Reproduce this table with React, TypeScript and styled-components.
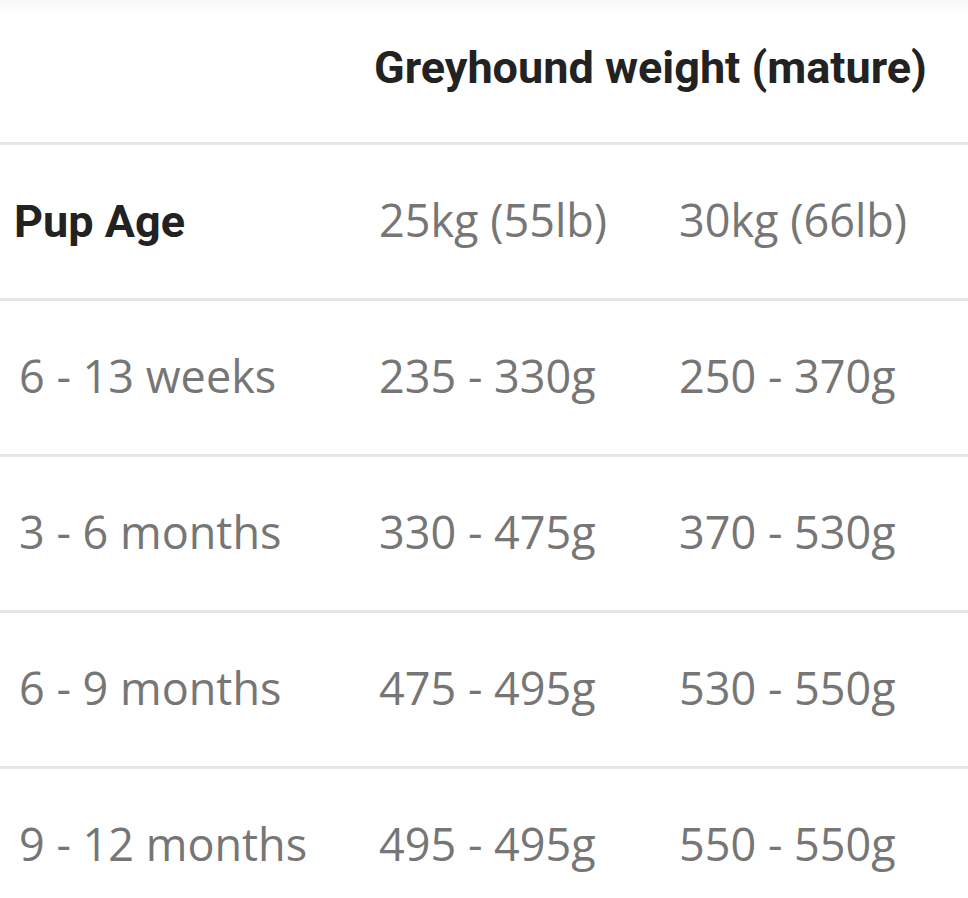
import React from "react";
import styled, { createGlobalStyle } from "styled-components";

const GlobalStyle = createGlobalStyle`
  html, body {
    margin: 0;
    padding: 0;
    background: #ffffff;
  }
`;

const rows = [
  { age: "6 - 13 weeks", a: "235 - 330g", b: "250 - 370g" },
  { age: "3 - 6 months", a: "330 - 475g", b: "370 - 530g" },
  { age: "6 - 9 months", a: "475 - 495g", b: "530 - 550g" },
  { age: "9 - 12 months", a: "495 - 495g", b: "550 - 550g" },
];

function App() {
  return (
    <>
      <GlobalStyle />
      <Page>
        <Table>
          <HeadRow>
            <HeadCell />
            <HeadCell $span={2}>Greyhound weight (mature)</HeadCell>
          </HeadRow>
          <Row>
            <HeadCell>Pup Age</HeadCell>
            <Cell>25kg (55lb)</Cell>
            <Cell>30kg (66lb)</Cell>
          </Row>
          {rows.map((r) => (
            <Row key={r.age}>
              <Cell>{r.age}</Cell>
              <Cell>{r.a}</Cell>
              <Cell>{r.b}</Cell>
            </Row>
          ))}
        </Table>
      </Page>
    </>
  );
}

const Page = styled.div`
  width: 968px;
  min-height: 898px;
  background: linear-gradient(#f8f8f8 0, #ffffff 14px);
`;

const Table = styled.div`
  display: flex;
  flex-direction: column;
`;

const Row = styled.div`
  display: grid;
  grid-template-columns: 360px 300px 1fr;
  align-items: center;
  box-sizing: border-box;
  height: 156px;
  border-bottom: 3px solid #e6e6e6;
`;

const HeadRow = styled(Row)`
  height: 145px;
  padding-bottom: 8px;
`;

const HeadCell = styled.div<{ $span?: number }>`
  grid-column: span ${(p) => p.$span ?? 1};
  padding: 0 14px;
  font-family: Roboto, "Liberation Sans", sans-serif;
  font-weight: 700;
  font-size: 45px;
  color: #222222;
  white-space: nowrap;
`;

const Cell = styled.div`
  padding: 0 14px 5px 19px;
  font-family: "Open Sans", "Liberation Sans", sans-serif;
  font-size: 45px;
  color: #767676;
  white-space: nowrap;
`;

export default App;
